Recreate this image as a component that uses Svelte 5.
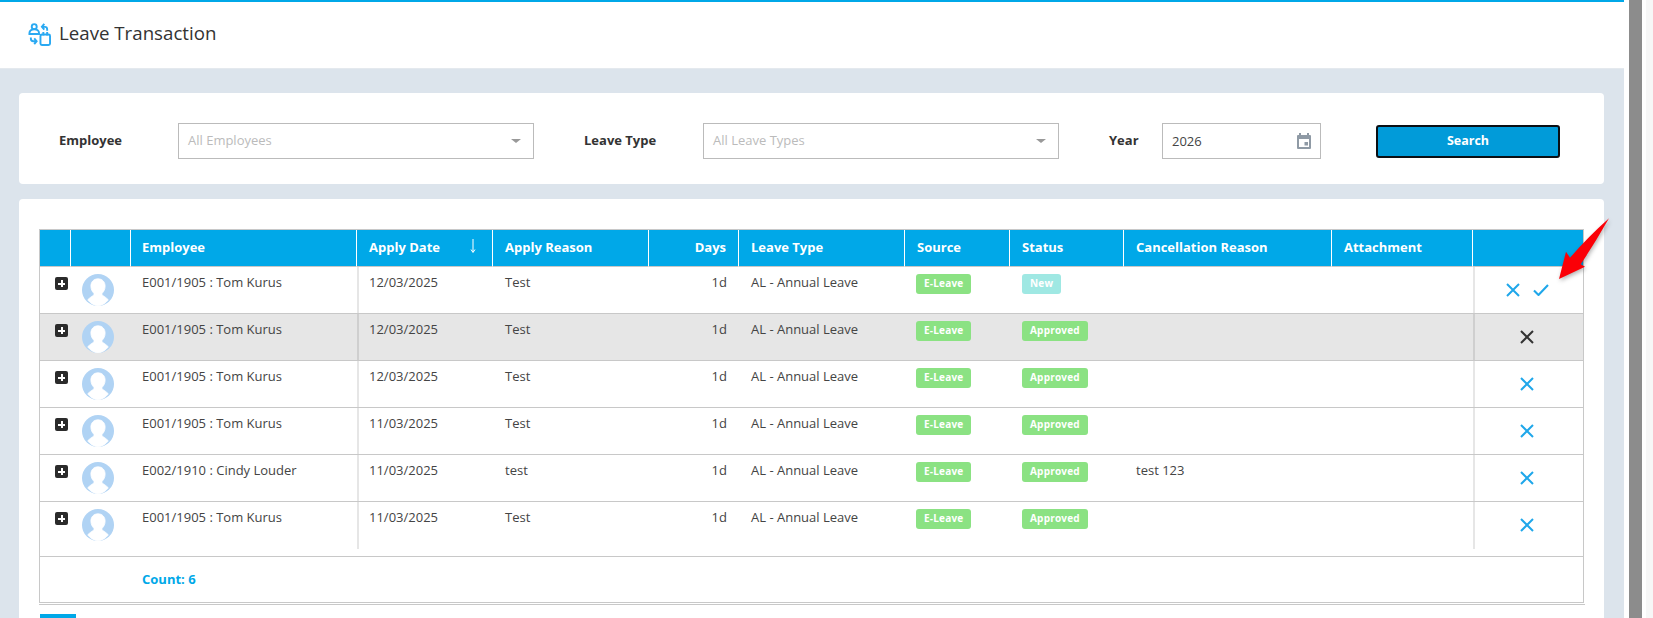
<script>
  const rows = [
    { emp: 'E001/1905 : Tom Kurus', date: '12/03/2025', reason: 'Test', status: 'New', cancel: '', approve: true },
    { emp: 'E001/1905 : Tom Kurus', date: '12/03/2025', reason: 'Test', status: 'Approved', cancel: '', hover: true },
    { emp: 'E001/1905 : Tom Kurus', date: '12/03/2025', reason: 'Test', status: 'Approved', cancel: '' },
    { emp: 'E001/1905 : Tom Kurus', date: '11/03/2025', reason: 'Test', status: 'Approved', cancel: '' },
    { emp: 'E002/1910 : Cindy Louder', date: '11/03/2025', reason: 'test', status: 'Approved', cancel: 'test 123' },
    { emp: 'E001/1905 : Tom Kurus', date: '11/03/2025', reason: 'Test', status: 'Approved', cancel: '' }
  ];
  const widths = [31, 60, 226, 136, 156, 90, 166, 105, 114, 208, 141, 110];
</script>

<div class="shell">
  <main class="main">
    <header class="head">
      <svg class="head-icon" viewBox="0 0 24 24" width="23" height="23" fill="none" stroke="#2aa9f2" stroke-width="2">
        <circle cx="6.500" cy="3.800" r="2.600" />
        <path d="M1.500 11.500v-1a5 4 0 0 1 10 0v1z" />
        <path d="M20 8V6.500A2.500 2.500 0 0 0 17.500 4H15M17 1l-2.500 3L17 7" />
        <path d="M3 15v1.500A2.500 2.500 0 0 0 5.500 19H8M6.500 16 9 19l-2.500 3" />
        <rect x="13" y="12" width="10" height="11" rx="1.500" />
        <path d="M16 9.500V13M20 9.500V13" />
      </svg>
      <h1>Leave Transaction</h1>
    </header>

    <section class="card filters">
      <span class="lbl l1">Employee</span>
      <div class="field f1"><span class="ph">All Employees</span><i class="caret"></i></div>
      <span class="lbl l2">Leave Type</span>
      <div class="field f2"><span class="ph">All Leave Types</span><i class="caret"></i></div>
      <span class="lbl l3">Year</span>
      <div class="field f3">
        <span class="val">2026</span>
        <svg viewBox="0 0 16 16" width="16" height="16">
          <path fill="#8f9aa5" d="M3 0h2v2h6V0h2v2h1a1 1 0 0 1 1 1v12a1 1 0 0 1-1 1H2a1 1 0 0 1-1-1V3a1 1 0 0 1 1-1h1zM3 6v8h10V6z" />
          <rect x="8.500" y="9" width="3.500" height="3.500" fill="#8f9aa5" />
        </svg>
      </div>
      <button class="search"><span>Search</span></button>
    </section>

    <section class="card grid-card">
      <table>
        <colgroup>
          {#each widths as w}<col style="width:{w}px" />{/each}
        </colgroup>
        <thead>
          <tr>
            <th></th><th></th><th class="emp">Employee</th>
            <th class="sort">Apply Date<svg viewBox="0 0 8 16" width="8" height="16" fill="none" stroke="#fff" stroke-width="1"><path d="M4 1v13M2 11.500 4 14.500 6 11.500" /></svg></th>
            <th>Apply Reason</th><th class="r">Days</th><th>Leave Type</th><th>Source</th><th>Status</th><th>Cancellation Reason</th><th>Attachment</th><th></th>
          </tr>
        </thead>
        <tbody>
          {#each rows as row}
            <tr class:hover={row.hover}>
              <td class="exp"><span class="plus"></span></td>
              <td class="ava">
                <svg viewBox="0 0 32 32" width="32" height="32">
                  <circle cx="16" cy="16" r="16" fill="#b0d3f4" />
                  <path fill="#fff" stroke="#fff" stroke-width=".8" d="M16 4.800c-4.400 0-7.100 3.300-7.100 7.300 0 3.200 1.400 5.600 2.800 7 .6.700.4 1.800-.4 2.400-1.500 1-3.600 2.200-5.600 4.300A16 16 0 0 0 16 32a16 16 0 0 0 10.300-6.200c-2-2.100-4.100-3.300-5.600-4.300-.8-.6-1-1.700-.4-2.400 1.400-1.400 2.800-3.800 2.800-7 0-4-2.700-7.300-7.100-7.300z" />
                </svg>
              </td>
              <td class="emp">{row.emp}</td>
              <td class="sep">{row.date}</td>
              <td>{row.reason}</td>
              <td class="r">1d</td>
              <td>AL - Annual Leave</td>
              <td><span class="badge green src">E-Leave</span></td>
              <td><span class="badge {row.status === 'New' ? 'teal' : 'green'}">{row.status}</span></td>
              <td>{row.cancel}</td>
              <td></td>
              <td class="sep act">
                <div class="acts">
                  <svg viewBox="0 0 14 14" width="14" height="14" fill="none" stroke="currentColor" stroke-width="2"><path d="M1 1l12 12M13 1 1 13" /></svg>
                  {#if row.approve}
                    <svg class="chk" viewBox="0 0 16 12" width="16" height="12" fill="none" stroke="currentColor" stroke-width="2.100"><path d="M1 6.500 5.500 11 15 1" /></svg>
                  {/if}
                </div>
              </td>
            </tr>
          {/each}
          <tr class="spacer"><td colspan="12"></td></tr>
          <tr class="count"><td colspan="2"></td><td class="total" colspan="10">Count: 6</td></tr>
        </tbody>
      </table>
      <div class="rule"></div>
      <div class="pager"></div>
    </section>

    <svg class="arrow" viewBox="0 0 60 70" width="60" height="70">
      <path fill="#fb0007" d="M51 1.300Q37 26 22.700 47.300L27 49.700 1 62 8 34.700 12 40.700Q30 20 51 1.300z" />
    </svg>
  </main>
  <aside class="rail"><div class="thumb"></div><div class="gutter"></div></aside>
</div>

<style>
  :global(body) { margin: 0; overflow: hidden; background: #fff; }
  .shell { display: flex; height: 618px; overflow: hidden; font-family: "Open Sans", sans-serif; font-size: 12px; color: #333; }
  .main { position: relative; width: 1624px; flex: none; background: #dce4ec; overflow: hidden; }
  .head { height: 66px; border-top: 2px solid #00a8e8; border-bottom: 1px solid #e4e9ee; background: #fff; display: flex; align-items: center; padding-left: 28px; gap: 8px; }
  .head-icon { margin-top: -2px; }
  h1 { margin: 0; font-size: 18.700px; font-weight: 400; color: #333; position: relative; top: -3px; }
  .card { background: #fff; border-radius: 4px; margin: 0 20px 0 19px; }
  .filters { margin-top: 24px; height: 91px; box-sizing: border-box; padding-top: 5px; display: flex; align-items: center; }
  .lbl { font-weight: 700; font-size: 13px; color: #333; position: relative; top: -1px; }
  .l1 { margin-left: 40px; width: 119px; }
  .l2 { margin-left: 50px; width: 119px; }
  .l3 { margin-left: 50px; width: 53px; }
  .field { box-sizing: border-box; height: 36px; border: 1px solid #bbb; display: flex; align-items: center; justify-content: space-between; padding: 0 9px; }
  .f1, .f2 { width: 356px; padding-right: 12px; }
  .f3 { width: 159px; padding-right: 8px; }
  .ph { color: #bbb; font-size: 13px; position: relative; top: -1px; }
  .val { font-size: 13px; color: #444; }
  .caret { width: 0; height: 0; border-left: 5px solid transparent; border-right: 5px solid transparent; border-top: 4px solid #999; }
  .search { box-sizing: border-box; width: 184px; height: 33px; margin-left: 55px; background: #019bd9; color: #fff; border: 2px solid #0a0f14; border-radius: 3px; font: 700 12.500px "Open Sans", sans-serif; padding: 0 0 2px; }
  .grid-card { margin-top: 15px; height: 460px; padding: 30px 21px 0 20px; box-sizing: content-box; }
  table { border-collapse: separate; border-spacing: 0; table-layout: fixed; width: 1544px; border: 1px solid #c8c8c8; }
  th { height: 37px; padding: 0 12px 3px; box-sizing: border-box; background: #00a8e8; color: #fff; font-size: 13px; font-weight: 700; text-align: left; border-right: 1px solid #fff; border-bottom: 1px solid #c8c8c8; }
  th:last-child { border-right: 0; }
  th.r, td.r { text-align: right; }
  th.emp, td.emp { padding-left: 11px; }
  th.sort { position: relative; }
  th.sort svg { position: absolute; right: 15px; top: 8px; }
  td { height: 47px; padding: 6px 12px 0; box-sizing: border-box; vertical-align: top; font-size: 13px; line-height: 18px; color: #444; border-bottom: 1px solid #c8c8c8; }
  tr.hover td { background: #e6e6e6; }
  td.sep { box-shadow: inset 2px 0 0 #e6e6e6; }
  tr.hover td.sep { box-shadow: inset 2px 0 0 #cfcfcf; }
  tbody tr:nth-last-child(3) td { border-bottom: 0; }
  td.exp { padding: 10px 0 0 15px; }
  td.ava { padding: 7px 0 0 11px; }
  td.ava svg { display: block; }
  .plus { display: block; width: 13px; height: 13px; border-radius: 2px; background: linear-gradient(#fff, #fff) center / 7px 2px no-repeat, linear-gradient(#fff, #fff) center / 2px 7px no-repeat, #2b2b2b; }
  .badge { display: inline-block; vertical-align: top; margin-top: 1px; height: 20px; line-height: 19px; padding: 0 8px; border-radius: 3px; font-size: 10px; font-weight: 700; color: #fff; letter-spacing: .2px; }
  .src { margin-left: -1px; }
  .green { background: #8be283; }
  .teal { background: #9fe8e3; }
  .acts { display: flex; justify-content: center; gap: 13px; align-items: center; color: #1fa7ea; padding: 10px 2px 0 0; }
  tr.hover .acts { color: #333; }
  .spacer td { height: 8px; padding: 0; border-bottom: 1px solid #c8c8c8; line-height: 0; font-size: 0; }
  .count td { height: 45px; border-bottom: 0; padding: 0 12px 1px; vertical-align: middle; color: #00a8e8; font-weight: 700; font-size: 13px; }
  .count td.total { padding-left: 11px; }
  .rule { width: 1546px; height: 1px; margin-top: 1px; background: #c8c8c8; }
  .pager { width: 36px; height: 14px; margin: 9px 0 0 1px; background: #00a8e8; }
  .arrow { position: absolute; left: 1558px; top: 217px; filter: drop-shadow(1px 2px 2px rgba(0,0,0,.3)); }
  .rail { flex: 1; display: flex; background: #fff; padding-left: 5px; }
  .thumb { width: 13px; background: #8c8c8c; }
  .gutter { flex: 1; background: #f7f7f7; border-left: 4px solid #fff; }
</style>
